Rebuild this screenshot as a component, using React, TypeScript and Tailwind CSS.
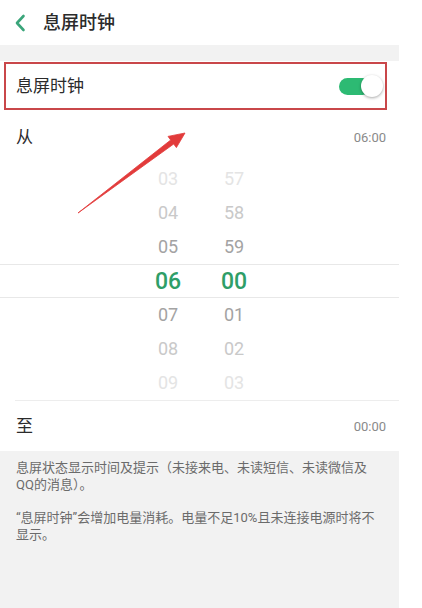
import React from "react";

const hours = [
  { t: "03", c: "text-[#e4e4e4]" },
  { t: "04", c: "text-[#c9c9c9]" },
  { t: "05", c: "text-[#a3a3a3]" },
  { t: "06", c: "sel" },
  { t: "07", c: "text-[#a3a3a3]" },
  { t: "08", c: "text-[#c9c9c9]" },
  { t: "09", c: "text-[#e4e4e4]" },
];
const mins = ["57", "58", "59", "00", "01", "02", "03"];

export default function App() {
  return (
    <div
      className="relative w-[422px] h-[608px] bg-white overflow-hidden"
      style={{ fontFamily: 'Roboto, "Noto Sans CJK SC", sans-serif' }}
    >
      <div className="w-[399px] flex flex-col h-full">
        {/* header */}
        <div className="h-[45px] flex items-center shrink-0">
          <svg width="12" height="18" viewBox="0 0 12 18" className="ml-[14px]">
            <path d="M9.5 2 L3 9 L9.5 16" fill="none" stroke="#3aa57a" strokeWidth="2.6" strokeLinecap="round" strokeLinejoin="round" />
          </svg>
          <span className="ml-[17px] text-[18px] font-medium text-[#2b2b2b] leading-none">息屏时钟</span>
        </div>
        <div className="h-[16px] bg-[#f2f2f2] shrink-0" />
        {/* switch row */}
        <div className="h-[51px] pt-[1px] shrink-0">
          <div className="ml-[4px] w-[383px] h-[48px] border-2 border-[#c9474a] flex items-center justify-between">
            <span className="ml-[10px] text-[17px] text-[#2b2b2b] leading-none">息屏时钟</span>
            <div className="relative w-[44px] h-[22px] mr-[2px] flex items-center">
              <div className="w-[32px] h-[17px] rounded-full bg-[#2dba73]" />
              <div className="absolute right-0 top-0 w-[22px] h-[22px] rounded-full bg-white shadow-[0_1px_3px_rgba(0,0,0,0.35)]" />
            </div>
          </div>
        </div>
        {/* from row */}
        <div className="h-[50px] flex items-center justify-between shrink-0">
          <span className="ml-[16px] text-[17px] text-[#2b2b2b] leading-none">从</span>
          <span className="mr-[13px] text-[13px] text-[#8a8a8a] leading-none">06:00</span>
        </div>
        {/* picker */}
        <div className="flex flex-col shrink-0">
          {hours.map((h, i) => {
            const sel = h.c === "sel";
            return (
              <div
                key={i}
                className={
                  sel
                    ? "h-[34px] flex items-center border-y border-[#e8e8e8]"
                    : "h-[34px] flex items-center"
                }
              >
                <span
                  className={
                    sel
                      ? "w-[40px] ml-[148px] text-center text-[23px] font-medium text-[#2e9e68] leading-none"
                      : "w-[40px] ml-[148px] text-center text-[18px] leading-none " + h.c
                  }
                >
                  {h.t}
                </span>
                <span
                  className={
                    sel
                      ? "w-[40px] ml-[26px] text-center text-[23px] font-medium text-[#2e9e68] leading-none"
                      : "w-[40px] ml-[26px] text-center text-[18px] leading-none " + h.c
                  }
                >
                  {mins[i]}
                </span>
              </div>
            );
          })}
        </div>
        {/* to row */}
        <div className="ml-[15px] h-[51px] border-t border-[#ededed] flex items-center justify-between shrink-0">
          <span className="ml-[1px] text-[17px] text-[#2b2b2b] leading-none">至</span>
          <span className="mr-[13px] text-[13px] text-[#8a8a8a] leading-none">00:00</span>
        </div>
        {/* description */}
        <div className="flex-1 bg-[#f2f2f2] pt-[8px] pl-[16px] text-[13px] leading-[17px] text-[#6b6b6b]">
          <div className="whitespace-nowrap">息屏状态显示时间及提示（未接来电、未读短信、未读微信及</div>
          <div className="whitespace-nowrap">QQ的消息）。</div>
          <div className="whitespace-nowrap mt-[16px]">“息屏时钟”会增加电量消耗。电量不足10%且未连接电源时将不</div>
          <div className="whitespace-nowrap">显示。</div>
        </div>
      </div>
      {/* annotation arrow */}
      <svg className="absolute left-0 top-0 pointer-events-none" width="422" height="608">
        <polygon
          points="78,213 173.7,144 176.4,147.6 185,133 168,136.4 170.7,140"
          fill="#e23b3b"
          stroke="#e23b3b"
          strokeWidth="0.8"
          strokeLinejoin="round"
        />
      </svg>
    </div>
  );
}
